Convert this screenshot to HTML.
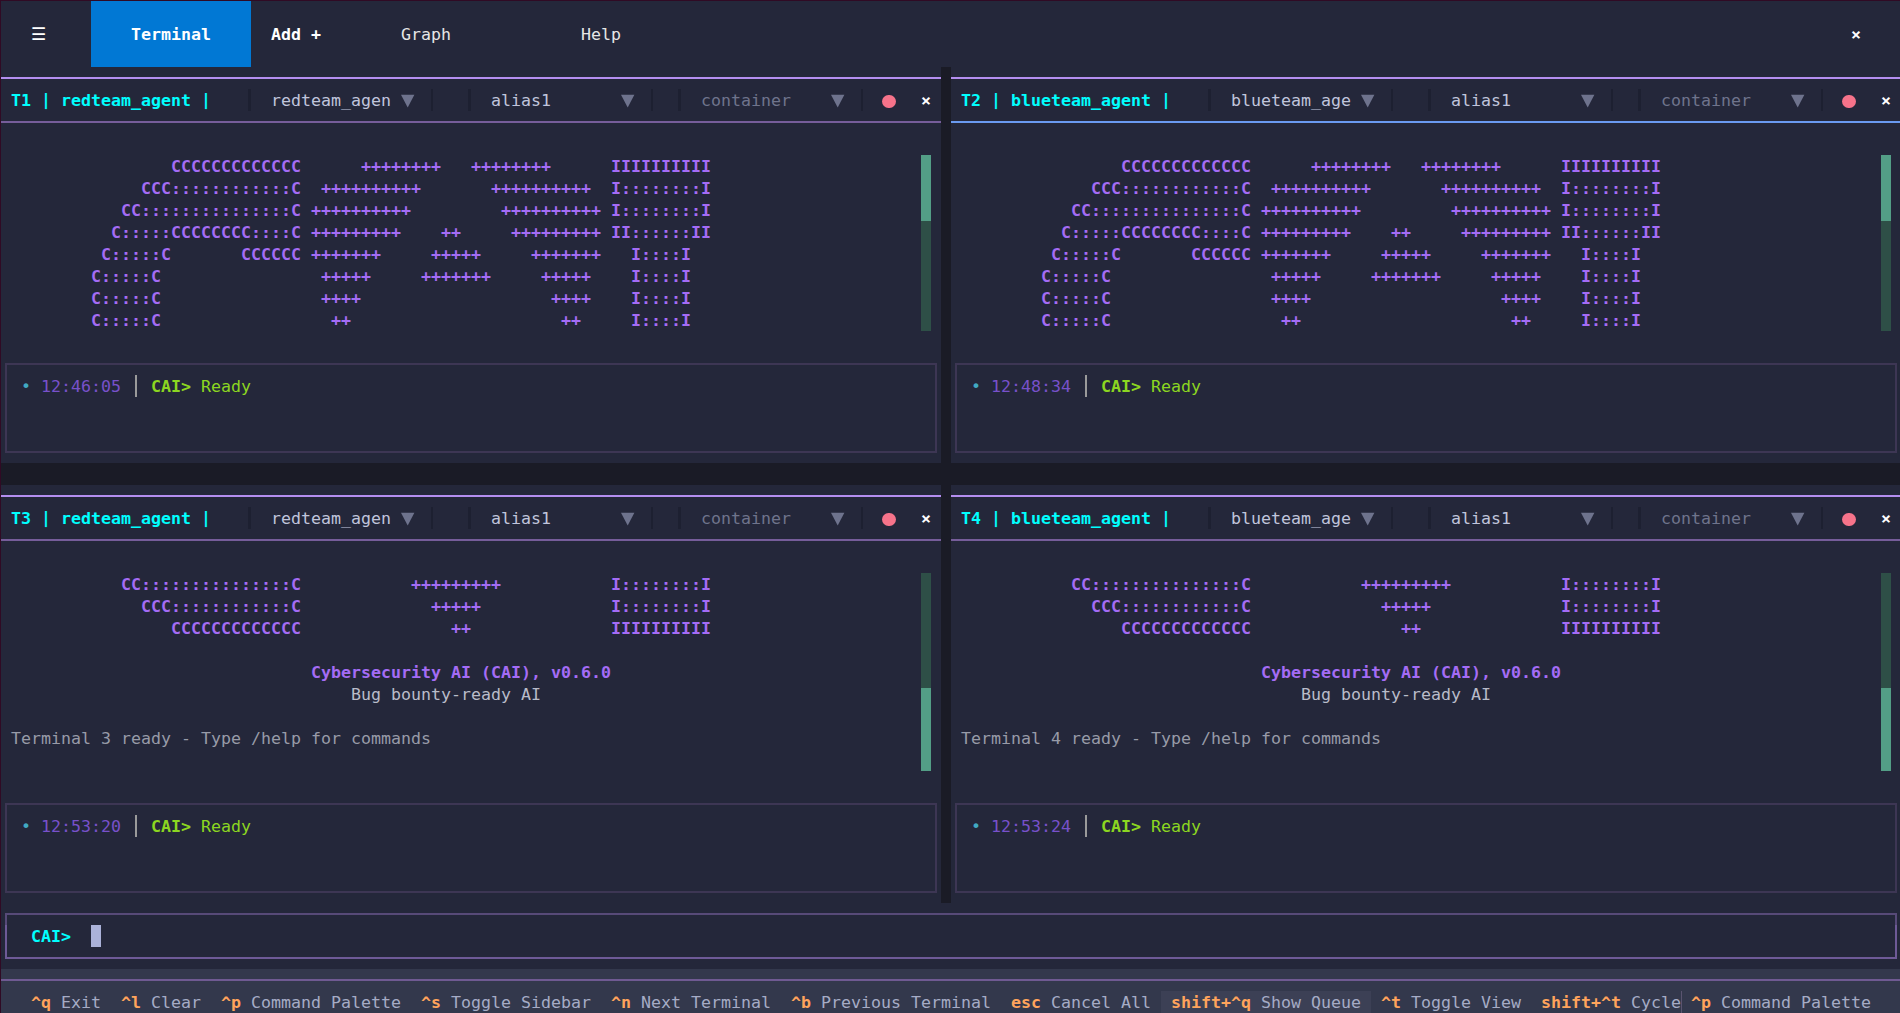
<!DOCTYPE html>
<html lang="en"><head><meta charset="utf-8"><title>CAI Terminal</title>
<style>
html,body{margin:0;padding:0;}
body{width:1900px;height:1013px;overflow:hidden;background:#300a24;position:relative;
 font-family:"DejaVu Sans Mono", "Liberation Mono", monospace;font-size:16.61px;line-height:22px;}
#scr{position:absolute;left:1px;top:1px;width:1899px;height:1012px;background:#24273a;}
.t{position:absolute;white-space:pre;height:22px;line-height:22px;margin-top:1px;font-kerning:none;font-variant-ligatures:none;}
.r{position:absolute;}
.b{font-weight:bold;}
.pp{position:relative;top:-1px;}
.w{color:#ffffff;}
.w2{color:#e6e6e6;}
.cy{color:#00ffff;}
.pu{color:#a46cf5;}
.sv{color:#c0c5dc;}
.ph{color:#6f748c;}
.arr{position:absolute;fill:#6e738d;}
.fg{color:#b9bcc9;}
.dim{color:#989ba8;}
.bul{color:#41a9c2;}
.ts{color:#7851ca;}
.gr{color:#8cd621;}
.key{color:#ffa45c;}
.fd{color:#a6acc6;}
.dot{position:absolute;width:13.8px;height:13.8px;border-radius:50%;background:#f6738a;}
.box{position:absolute;border:2px solid #3d3654;box-sizing:content-box;}
.box.main{border-color:#67548c;}
</style></head>
<body><div id="scr"></div>
<div class="r" style="left:91px;top:1px;width:160px;height:66px;background:#0178d4;"></div>
<span class="t w" style="left:31px;top:23px;" id="burger">☰</span>
<span class="t w b" style="left:131px;top:23px">Terminal</span>
<span class="t w b" style="left:271px;top:23px">Add +</span>
<span class="t w2" style="left:401px;top:23px">Graph</span>
<span class="t w2" style="left:581px;top:23px">Help</span>
<span class="t w b" style="left:1851px;top:23px">×</span>
<div class="r" style="left:941px;top:67px;width:10px;height:836px;background:#1a1b26;"></div>
<div class="r" style="left:1px;top:463px;width:1899px;height:22px;background:#1a1b26;"></div>
<div class="r" style="left:1px;top:77px;width:940px;height:2px;background:#b48ef0;"></div>
<div class="r" style="left:1px;top:121px;width:940px;height:2px;background:#765d9a;"></div>
<span class="t cy b" style="left:11px;top:89px">T1 <span class="pp">|</span> redteam_agent <span class="pp">|</span></span>
<div class="r" style="left:248px;top:89px;width:3px;height:22px;background:#1d2031;"></div>
<div class="r" style="left:431px;top:89px;width:2px;height:22px;background:#1d2031;"></div>
<span class="t sv" style="left:271px;top:89px">redteam_agen</span>
<svg class="arr" style="left:401px;top:94px" width="14" height="14" viewBox="0 0 14 14"><polygon points="0,0.8 13.4,0.8 6.7,13.6"/></svg>
<div class="r" style="left:468px;top:89px;width:3px;height:22px;background:#1d2031;"></div>
<div class="r" style="left:651px;top:89px;width:2px;height:22px;background:#1d2031;"></div>
<span class="t sv" style="left:491px;top:89px">alias1</span>
<svg class="arr" style="left:621px;top:94px" width="14" height="14" viewBox="0 0 14 14"><polygon points="0,0.8 13.4,0.8 6.7,13.6"/></svg>
<div class="r" style="left:678px;top:89px;width:3px;height:22px;background:#1d2031;"></div>
<div class="r" style="left:861px;top:89px;width:2px;height:22px;background:#1d2031;"></div>
<span class="t ph" style="left:701px;top:89px">container</span>
<svg class="arr" style="left:831px;top:94px" width="14" height="14" viewBox="0 0 14 14"><polygon points="0,0.8 13.4,0.8 6.7,13.6"/></svg>
<div class="dot" style="left:881.9px;top:94.6px"></div>
<span class="t w b" style="left:921px;top:89px">×</span>
<span class="t pu b" style="left:1px;top:155px">                 CCCCCCCCCCCCC      ++++++++   ++++++++      IIIIIIIIII</span>
<span class="t pu b" style="left:1px;top:177px">              CCC::::::::::::C  ++++++++++       ++++++++++  I::::::::I</span>
<span class="t pu b" style="left:1px;top:199px">            CC:::::::::::::::C ++++++++++         ++++++++++ I::::::::I</span>
<span class="t pu b" style="left:1px;top:221px">           C:::::CCCCCCCC::::C +++++++++    ++     +++++++++ II::::::II</span>
<span class="t pu b" style="left:1px;top:243px">          C:::::C       CCCCCC +++++++     +++++     +++++++   I::::I</span>
<span class="t pu b" style="left:1px;top:265px">         C:::::C                +++++     +++++++     +++++    I::::I</span>
<span class="t pu b" style="left:1px;top:287px">         C:::::C                ++++                   ++++    I::::I</span>
<span class="t pu b" style="left:1px;top:309px">         C:::::C                 ++                     ++     I::::I</span>
<div class="r" style="left:921px;top:155px;width:10px;height:176px;background:#2e4f47;"></div>
<div class="r" style="left:921px;top:155px;width:10px;height:66px;background:#539e86;"></div>
<div class="box" style="left:5px;top:363px;width:928px;height:86px"></div>
<span class="t bul" style="left:21px;top:375px">•</span>
<span class="t ts" style="left:41px;top:375px">12:46:05</span>
<div class="r" style="left:135px;top:375px;width:2px;height:22px;background:#9a9a9a;"></div>
<span class="t gr b" style="left:151px;top:375px">CAI&gt;</span>
<span class="t gr" style="left:201px;top:375px">Ready</span>
<div class="r" style="left:951px;top:77px;width:949px;height:2px;background:#b48ef0;"></div>
<div class="r" style="left:951px;top:121px;width:949px;height:2px;background:#6a9af0;"></div>
<span class="t cy b" style="left:961px;top:89px">T2 <span class="pp">|</span> blueteam_agent <span class="pp">|</span></span>
<div class="r" style="left:1208px;top:89px;width:3px;height:22px;background:#1d2031;"></div>
<div class="r" style="left:1391px;top:89px;width:2px;height:22px;background:#1d2031;"></div>
<span class="t sv" style="left:1231px;top:89px">blueteam_age</span>
<svg class="arr" style="left:1361px;top:94px" width="14" height="14" viewBox="0 0 14 14"><polygon points="0,0.8 13.4,0.8 6.7,13.6"/></svg>
<div class="r" style="left:1428px;top:89px;width:3px;height:22px;background:#1d2031;"></div>
<div class="r" style="left:1611px;top:89px;width:2px;height:22px;background:#1d2031;"></div>
<span class="t sv" style="left:1451px;top:89px">alias1</span>
<svg class="arr" style="left:1581px;top:94px" width="14" height="14" viewBox="0 0 14 14"><polygon points="0,0.8 13.4,0.8 6.7,13.6"/></svg>
<div class="r" style="left:1638px;top:89px;width:3px;height:22px;background:#1d2031;"></div>
<div class="r" style="left:1821px;top:89px;width:2px;height:22px;background:#1d2031;"></div>
<span class="t ph" style="left:1661px;top:89px">container</span>
<svg class="arr" style="left:1791px;top:94px" width="14" height="14" viewBox="0 0 14 14"><polygon points="0,0.8 13.4,0.8 6.7,13.6"/></svg>
<div class="dot" style="left:1841.9px;top:94.6px"></div>
<span class="t w b" style="left:1881px;top:89px">×</span>
<span class="t pu b" style="left:951px;top:155px">                 CCCCCCCCCCCCC      ++++++++   ++++++++      IIIIIIIIII</span>
<span class="t pu b" style="left:951px;top:177px">              CCC::::::::::::C  ++++++++++       ++++++++++  I::::::::I</span>
<span class="t pu b" style="left:951px;top:199px">            CC:::::::::::::::C ++++++++++         ++++++++++ I::::::::I</span>
<span class="t pu b" style="left:951px;top:221px">           C:::::CCCCCCCC::::C +++++++++    ++     +++++++++ II::::::II</span>
<span class="t pu b" style="left:951px;top:243px">          C:::::C       CCCCCC +++++++     +++++     +++++++   I::::I</span>
<span class="t pu b" style="left:951px;top:265px">         C:::::C                +++++     +++++++     +++++    I::::I</span>
<span class="t pu b" style="left:951px;top:287px">         C:::::C                ++++                   ++++    I::::I</span>
<span class="t pu b" style="left:951px;top:309px">         C:::::C                 ++                     ++     I::::I</span>
<div class="r" style="left:1881px;top:155px;width:10px;height:176px;background:#2e4f47;"></div>
<div class="r" style="left:1881px;top:155px;width:10px;height:66px;background:#539e86;"></div>
<div class="box" style="left:955px;top:363px;width:938px;height:86px"></div>
<span class="t bul" style="left:971px;top:375px">•</span>
<span class="t ts" style="left:991px;top:375px">12:48:34</span>
<div class="r" style="left:1085px;top:375px;width:2px;height:22px;background:#9a9a9a;"></div>
<span class="t gr b" style="left:1101px;top:375px">CAI&gt;</span>
<span class="t gr" style="left:1151px;top:375px">Ready</span>
<div class="r" style="left:1px;top:495px;width:940px;height:2px;background:#b48ef0;"></div>
<div class="r" style="left:1px;top:539px;width:940px;height:2px;background:#765d9a;"></div>
<span class="t cy b" style="left:11px;top:507px">T3 <span class="pp">|</span> redteam_agent <span class="pp">|</span></span>
<div class="r" style="left:248px;top:507px;width:3px;height:22px;background:#1d2031;"></div>
<div class="r" style="left:431px;top:507px;width:2px;height:22px;background:#1d2031;"></div>
<span class="t sv" style="left:271px;top:507px">redteam_agen</span>
<svg class="arr" style="left:401px;top:512px" width="14" height="14" viewBox="0 0 14 14"><polygon points="0,0.8 13.4,0.8 6.7,13.6"/></svg>
<div class="r" style="left:468px;top:507px;width:3px;height:22px;background:#1d2031;"></div>
<div class="r" style="left:651px;top:507px;width:2px;height:22px;background:#1d2031;"></div>
<span class="t sv" style="left:491px;top:507px">alias1</span>
<svg class="arr" style="left:621px;top:512px" width="14" height="14" viewBox="0 0 14 14"><polygon points="0,0.8 13.4,0.8 6.7,13.6"/></svg>
<div class="r" style="left:678px;top:507px;width:3px;height:22px;background:#1d2031;"></div>
<div class="r" style="left:861px;top:507px;width:2px;height:22px;background:#1d2031;"></div>
<span class="t ph" style="left:701px;top:507px">container</span>
<svg class="arr" style="left:831px;top:512px" width="14" height="14" viewBox="0 0 14 14"><polygon points="0,0.8 13.4,0.8 6.7,13.6"/></svg>
<div class="dot" style="left:881.9px;top:512.6px"></div>
<span class="t w b" style="left:921px;top:507px">×</span>
<span class="t pu b" style="left:1px;top:573px">            CC:::::::::::::::C           +++++++++           I::::::::I</span>
<span class="t pu b" style="left:1px;top:595px">              CCC::::::::::::C             +++++             I::::::::I</span>
<span class="t pu b" style="left:1px;top:617px">                 CCCCCCCCCCCCC               ++              IIIIIIIIII</span>
<span class="t pu b" style="left:311px;top:661px">Cybersecurity AI (CAI), v0.6.0</span>
<span class="t fg" style="left:351px;top:683px">Bug bounty-ready AI</span>
<span class="t dim" style="left:11px;top:727px">Terminal 3 ready - Type /help for commands</span>
<div class="r" style="left:921px;top:573px;width:10px;height:198px;background:#2e4f47;"></div>
<div class="r" style="left:921px;top:688px;width:10px;height:83px;background:#539e86;"></div>
<div class="box" style="left:5px;top:803px;width:928px;height:86px"></div>
<span class="t bul" style="left:21px;top:815px">•</span>
<span class="t ts" style="left:41px;top:815px">12:53:20</span>
<div class="r" style="left:135px;top:815px;width:2px;height:22px;background:#9a9a9a;"></div>
<span class="t gr b" style="left:151px;top:815px">CAI&gt;</span>
<span class="t gr" style="left:201px;top:815px">Ready</span>
<div class="r" style="left:951px;top:495px;width:949px;height:2px;background:#b48ef0;"></div>
<div class="r" style="left:951px;top:539px;width:949px;height:2px;background:#765d9a;"></div>
<span class="t cy b" style="left:961px;top:507px">T4 <span class="pp">|</span> blueteam_agent <span class="pp">|</span></span>
<div class="r" style="left:1208px;top:507px;width:3px;height:22px;background:#1d2031;"></div>
<div class="r" style="left:1391px;top:507px;width:2px;height:22px;background:#1d2031;"></div>
<span class="t sv" style="left:1231px;top:507px">blueteam_age</span>
<svg class="arr" style="left:1361px;top:512px" width="14" height="14" viewBox="0 0 14 14"><polygon points="0,0.8 13.4,0.8 6.7,13.6"/></svg>
<div class="r" style="left:1428px;top:507px;width:3px;height:22px;background:#1d2031;"></div>
<div class="r" style="left:1611px;top:507px;width:2px;height:22px;background:#1d2031;"></div>
<span class="t sv" style="left:1451px;top:507px">alias1</span>
<svg class="arr" style="left:1581px;top:512px" width="14" height="14" viewBox="0 0 14 14"><polygon points="0,0.8 13.4,0.8 6.7,13.6"/></svg>
<div class="r" style="left:1638px;top:507px;width:3px;height:22px;background:#1d2031;"></div>
<div class="r" style="left:1821px;top:507px;width:2px;height:22px;background:#1d2031;"></div>
<span class="t ph" style="left:1661px;top:507px">container</span>
<svg class="arr" style="left:1791px;top:512px" width="14" height="14" viewBox="0 0 14 14"><polygon points="0,0.8 13.4,0.8 6.7,13.6"/></svg>
<div class="dot" style="left:1841.9px;top:512.6px"></div>
<span class="t w b" style="left:1881px;top:507px">×</span>
<span class="t pu b" style="left:951px;top:573px">            CC:::::::::::::::C           +++++++++           I::::::::I</span>
<span class="t pu b" style="left:951px;top:595px">              CCC::::::::::::C             +++++             I::::::::I</span>
<span class="t pu b" style="left:951px;top:617px">                 CCCCCCCCCCCCC               ++              IIIIIIIIII</span>
<span class="t pu b" style="left:1261px;top:661px">Cybersecurity AI (CAI), v0.6.0</span>
<span class="t fg" style="left:1301px;top:683px">Bug bounty-ready AI</span>
<span class="t dim" style="left:961px;top:727px">Terminal 4 ready - Type /help for commands</span>
<div class="r" style="left:1881px;top:573px;width:10px;height:198px;background:#2e4f47;"></div>
<div class="r" style="left:1881px;top:688px;width:10px;height:83px;background:#539e86;"></div>
<div class="box" style="left:955px;top:803px;width:938px;height:86px"></div>
<span class="t bul" style="left:971px;top:815px">•</span>
<span class="t ts" style="left:991px;top:815px">12:53:24</span>
<div class="r" style="left:1085px;top:815px;width:2px;height:22px;background:#9a9a9a;"></div>
<span class="t gr b" style="left:1101px;top:815px">CAI&gt;</span>
<span class="t gr" style="left:1151px;top:815px">Ready</span>
<div class="r" style="left:5px;top:913px;width:1892px;height:2px;background:#574a78;"></div>
<div class="r" style="left:5px;top:915px;width:2px;height:10px;background:#574a78;"></div>
<div class="r" style="left:1895px;top:915px;width:2px;height:10px;background:#574a78;"></div>
<div class="r" style="left:5px;top:925px;width:2px;height:34px;background:#6e5a97;"></div>
<div class="r" style="left:1895px;top:925px;width:2px;height:34px;background:#6e5a97;"></div>
<div class="r" style="left:5px;top:957px;width:1892px;height:2px;background:#6e5a97;"></div>
<span class="t cy b" style="left:31px;top:925px">CAI&gt;</span>
<div class="r" style="left:91px;top:925px;width:10px;height:22px;background:#abb2d9;"></div>
<div class="r" style="left:1px;top:969px;width:1899px;height:44px;background:#33384c;"></div>
<div class="r" style="left:1px;top:979px;width:1899px;height:2px;background:#6f5a92;"></div>
<div class="r" style="left:1161px;top:991px;width:210px;height:22px;background:#3c4055;"></div>
<span class="t key b" style="left:31px;top:991px">^q</span>
<span class="t fd" style="left:61px;top:991px">Exit</span>
<span class="t key b" style="left:121px;top:991px">^l</span>
<span class="t fd" style="left:151px;top:991px">Clear</span>
<span class="t key b" style="left:221px;top:991px">^p</span>
<span class="t fd" style="left:251px;top:991px">Command Palette</span>
<span class="t key b" style="left:421px;top:991px">^s</span>
<span class="t fd" style="left:451px;top:991px">Toggle Sidebar</span>
<span class="t key b" style="left:611px;top:991px">^n</span>
<span class="t fd" style="left:641px;top:991px">Next Terminal</span>
<span class="t key b" style="left:791px;top:991px">^b</span>
<span class="t fd" style="left:821px;top:991px">Previous Terminal</span>
<span class="t key b" style="left:1011px;top:991px">esc</span>
<span class="t fd" style="left:1051px;top:991px">Cancel All</span>
<span class="t key b" style="left:1171px;top:991px">shift+^q</span>
<span class="t fd" style="left:1261px;top:991px">Show Queue</span>
<span class="t key b" style="left:1381px;top:991px">^t</span>
<span class="t fd" style="left:1411px;top:991px">Toggle View</span>
<span class="t key b" style="left:1541px;top:991px">shift+^t</span>
<span class="t fd" style="left:1631px;top:991px">Cycle</span>
<span class="t key b" style="left:1691px;top:991px">^p</span>
<span class="t fd" style="left:1721px;top:991px">Command Palette</span>
<div class="r" style="left:1681px;top:991px;width:1px;height:22px;background:#5a5470;"></div>
</body></html>
